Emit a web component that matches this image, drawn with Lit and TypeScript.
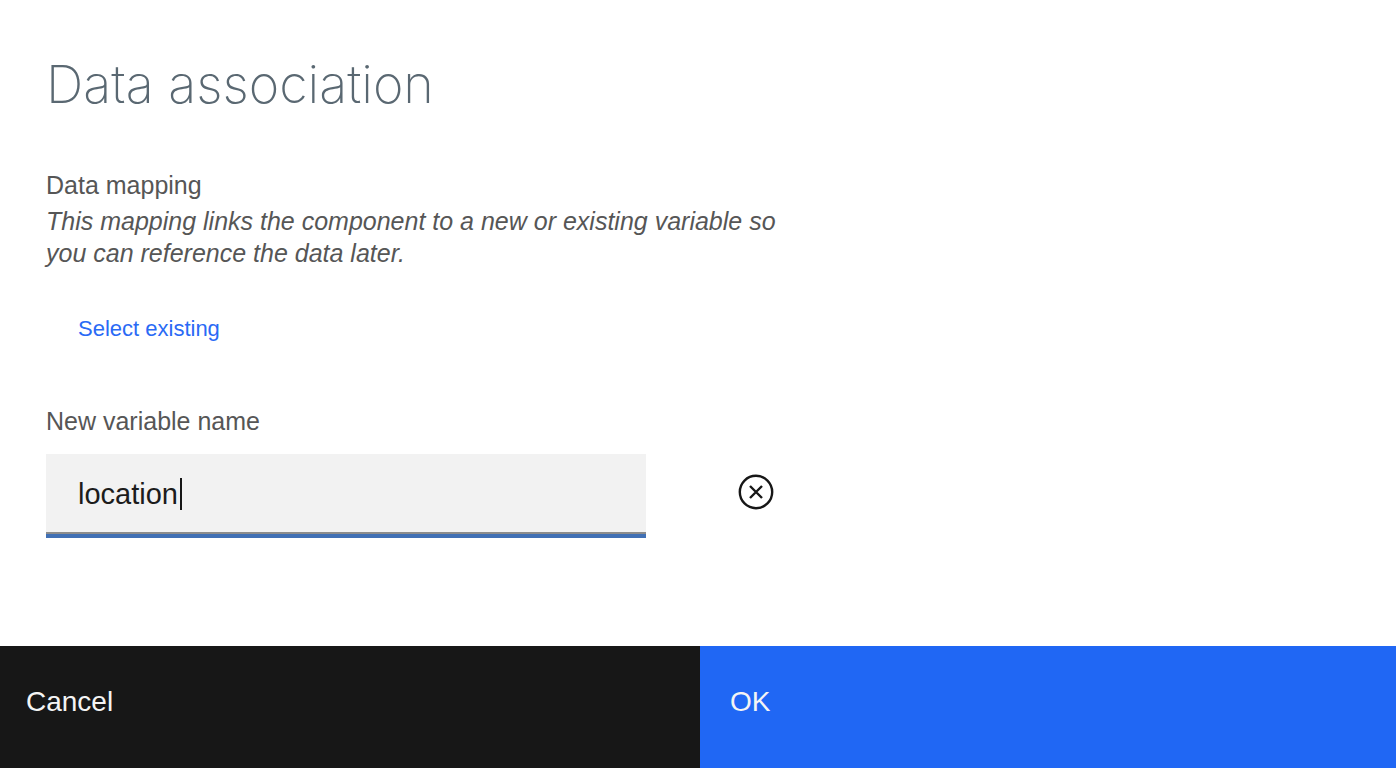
import { LitElement, html, css } from "lit";
import { customElement, state } from "lit/decorators.js";

@customElement("app-root")
export class AppRoot extends LitElement {
  @state() private name = "location";

  static styles = css`
    :host {
      display: flex;
      flex-direction: column;
      min-height: 100vh;
      box-sizing: border-box;
      background: #fff;
      color: #565656;
      font-family: "Liberation Sans", Arial, sans-serif;
      font-size: 25px;
      line-height: 32px;
    }
    * {
      box-sizing: border-box;
    }
    button,
    input {
      margin: 0;
      border: 0;
      border-radius: 0;
      font: inherit;
    }
    button {
      cursor: pointer;
    }
    main {
      flex: 1;
      padding: 53px 46px 40px;
    }
    h1 {
      margin: 0 0 52px;
      color: #5a6872;
      font-family: Inter, sans-serif;
      font-size: 52px;
      font-weight: 250;
      line-height: 64px;
    }
    h2 {
      margin: 0 0 4px;
      font-size: 25px;
      font-weight: 400;
    }
    .hint {
      max-width: 760px;
      margin: 0;
      font-style: italic;
    }
    .select {
      display: block;
      margin: 44px 0 0;
      padding: 0 32px;
      background: none;
      color: #2a6af5;
      font-size: 22px;
    }
    label {
      display: block;
      margin: 60px 0 17px;
    }
    .row {
      display: flex;
      align-items: flex-start;
      gap: 92px;
    }
    .field {
      position: relative;
      flex: 0 1 600px;
    }
    .field input {
      display: block;
      width: 100%;
      height: 84px;
      padding: 0 32px;
      border-bottom: 4px solid #4170b4;
      outline: none;
      background: #f2f2f2;
      box-shadow: inset 0 -2px #8c8c8c;
      color: #1c1c1c;
      caret-color: transparent;
      font-size: 29px;
    }
    .caret {
      position: absolute;
      top: 24px;
      left: 134px;
      width: 2px;
      height: 32px;
      background: #171717;
    }
    .clear {
      display: flex;
      margin-top: 20px;
      padding: 0;
      background: none;
      color: #171717;
    }
    footer {
      display: grid;
      grid-template-columns: 700px 1fr;
    }
    footer button {
      height: 122px;
      padding: 0 30px 10px;
      color: #f4f4f4;
      font-size: 28px;
      text-align: left;
    }
    .cancel {
      padding-left: 26px;
      background: #171717;
    }
    .ok {
      background: #2067f4;
    }
  `;

  render() {
    return html`
      <main>
        <h1>Data association</h1>
        <h2>Data mapping</h2>
        <p class="hint">
          This mapping links the component to a new or existing variable so you
          can reference the data later.
        </p>
        <button class="select" type="button">Select existing</button>
        <label for="variable">New variable name</label>
        <div class="row">
          <div class="field">
            <input
              id="variable"
              type="text"
              .value=${this.name}
              @input=${(e: Event) =>
                (this.name = (e.target as HTMLInputElement).value)}
            />
            <span class="caret"></span>
          </div>
          <button
            class="clear"
            type="button"
            aria-label="Clear"
            @click=${() => (this.name = "")}
          >
            <svg
              width="36"
              height="36"
              viewBox="0 0 36 36"
              fill="none"
              stroke="currentColor"
              stroke-width="2.4"
            >
              <circle cx="18" cy="18" r="16.2" />
              <path d="M12 12l12 12M24 12L12 24" />
            </svg>
          </button>
        </div>
      </main>
      <footer>
        <button class="cancel" type="button">Cancel</button>
        <button class="ok" type="button">OK</button>
      </footer>
    `;
  }
}
